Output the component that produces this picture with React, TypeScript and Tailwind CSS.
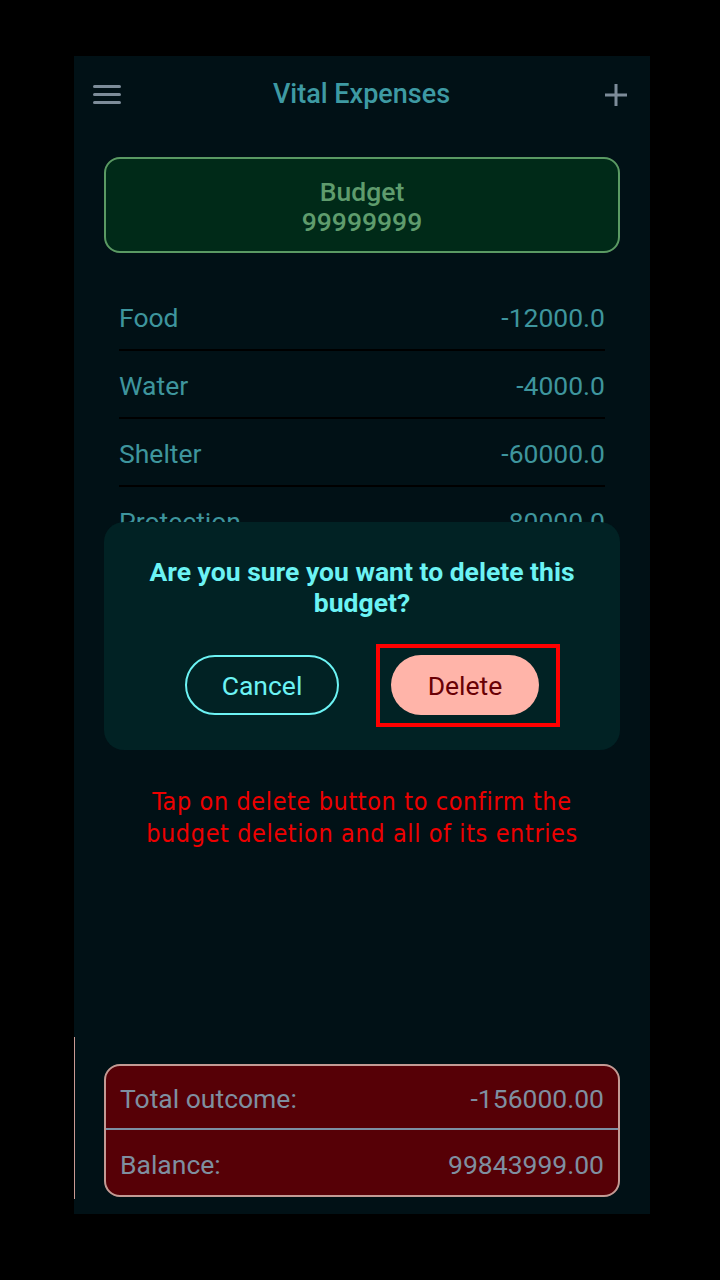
import React from 'react';

const rows = [
  { label: 'Food', value: '-12000.0' },
  { label: 'Water', value: '-4000.0' },
  { label: 'Shelter', value: '-60000.0' },
  { label: 'Protection', value: '-80000.0' },
];

const App = () => {
  return (
    <div className="w-[720px] h-[1280px] bg-black pt-[56px] pl-[74px]" style={{ fontFamily: 'Roboto, "Noto Sans", sans-serif' }}>
      <div className="relative w-[576px] h-[1158px] bg-[#011116] flex flex-col overflow-hidden">
        {/* left edge line */}
        <div className="absolute left-0 top-[981px] w-px h-[162px] bg-[#c99a94]" />

        {/* Header */}
        <div className="h-[76px] flex items-center justify-between pl-[19px] pr-[22px] pt-[1px]">
          <div className="flex flex-col gap-[5px] w-[28px]">
            <div className="h-[3px] bg-[#7d8c99] rounded-sm" />
            <div className="h-[3px] bg-[#7d8c99] rounded-sm" />
            <div className="h-[3px] bg-[#7d8c99] rounded-sm" />
          </div>
          <h1 className="text-[27px] font-medium text-[#3e9aa3] mr-[2px]">Vital Expenses</h1>
          <svg width="24" height="24" viewBox="0 0 24 24">
            <path d="M12 1v22M1 12h22" stroke="#7d8c99" strokeWidth="3" />
          </svg>
        </div>

        {/* Budget card */}
        <div className="px-[30px] mt-[25px]">
          <div className="h-[96px] rounded-[16px] border-2 border-[#5a9a63] bg-[#002a18] flex flex-col items-center justify-center pt-[3px] leading-[30px] text-[26.5px] font-medium text-[#5f9c6d]">
            <span>Budget</span>
            <span>99999999</span>
          </div>
        </div>

        {/* Entries */}
        <div className="px-[45px] mt-[30px] flex flex-col">
          {rows.map((row, i) => (
            <div key={i} className="h-[68px] flex items-center justify-between border-b-2 border-black text-[26.5px] text-[#3e959d] pt-[4px]">
              <span>{row.label}</span>
              <span>{row.value}</span>
            </div>
          ))}
        </div>

        {/* Totals */}
        <div className="mt-auto mb-[17px] px-[30px]">
          <div className="rounded-[16px] border-2 border-[#c39a94] bg-[#560006] flex flex-col text-[26.5px] text-[#7f8fa0]">
            <div className="h-[64px] flex items-center justify-between px-[14px] pt-[3px] border-b-2 border-[#7d8fa3]">
              <span>Total outcome:</span>
              <span>-156000.00</span>
            </div>
            <div className="h-[65px] flex items-center justify-between px-[14px] pt-[5px]">
              <span>Balance:</span>
              <span>99843999.00</span>
            </div>
          </div>
        </div>

        {/* Dialog */}
        <div className="absolute left-[30px] top-[466px] w-[516px] h-[228px] rounded-[20px] bg-[#012224] flex flex-col items-center pt-[34px]">
          <p className="text-[26.5px] leading-[31px] font-bold text-[#6cf3f4] text-center px-[30px]">
            Are you sure you want to delete this budget?
          </p>
          <div className="flex gap-[52px] mt-[37px]">
            <button className="w-[154px] h-[60px] rounded-full border-2 border-[#6cf3f4] text-[26.5px] text-[#6cf3f4] pt-[2px]">
              Cancel
            </button>
            <div className="relative">
              <button className="w-[148px] h-[60px] rounded-full bg-[#ffb4a9] text-[26.5px] text-[#690005] pt-[2px]">
                Delete
              </button>
              <div className="absolute -left-[15px] -top-[11px] w-[184px] h-[83px] border-4 border-[#ff0000]" />
            </div>
          </div>
        </div>

        {/* Annotation */}
        <p
          className="absolute left-0 top-[730px] w-[576px] text-center text-[25px] leading-[32px] tracking-[0.6px] text-[#ee0000]"
          style={{ fontFamily: '"DejaVu Sans Condensed", "DejaVu Sans", sans-serif' }}
        >
          Tap on delete button to confirm the
          <br />
          budget deletion and all of its entries
        </p>
      </div>
    </div>
  );
};

export default App;
